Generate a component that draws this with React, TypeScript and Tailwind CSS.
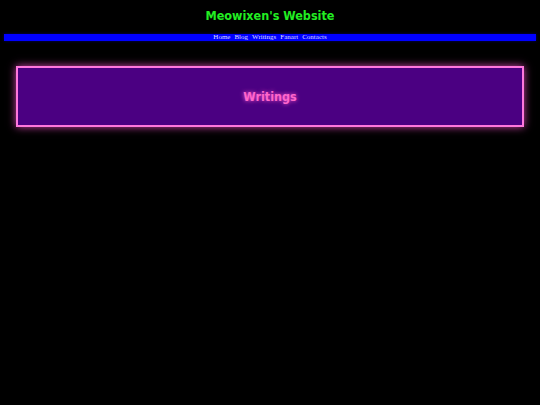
export default function App() {
  const links = ['Home', 'Blog', 'Writings', 'Fanart', 'Contacts']
  return (
    <div className="min-h-[405px] w-full bg-black">
      {/* Header */}
      <div className="flex h-[34px] items-center justify-center pb-[1px]">
        <h1 className="font-['DejaVu_Sans_Condensed','DejaVu_Sans',sans-serif] text-[12.5px] font-bold leading-none text-[#22ee22]">
          Meowixen&apos;s Website
        </h1>
      </div>

      {/* Nav */}
      <nav className="mx-[4px] flex h-[7px] items-center justify-center gap-[4px] bg-[#0000ff] shadow-[0_0_3px_#000066]">
        {links.map((l) => (
          <span key={l} className="font-['Liberation_Serif',serif] text-[7px] leading-none text-[#ddddff]">
            {l}
          </span>
        ))}
      </nav>

      {/* Writings box */}
      <div className="mx-[16px] mt-[25px] flex h-[61px] items-center justify-center border-2 border-[#ff77dd] bg-[#4b0082] pt-[2px] shadow-[0_0_8px_#cc44aa]">
        <h2 className="font-['DejaVu_Sans_Condensed','DejaVu_Sans',sans-serif] text-[12.5px] font-bold leading-none text-[#ff66cc] [text-shadow:0_0_4px_#ff55cc]">
          Writings
        </h2>
      </div>
    </div>
  )
}
